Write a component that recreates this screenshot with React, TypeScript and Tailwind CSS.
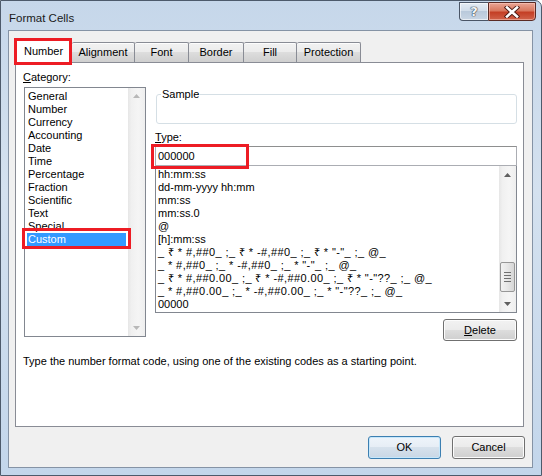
import React from "react";

const categories = [
  "General",
  "Number",
  "Currency",
  "Accounting",
  "Date",
  "Time",
  "Percentage",
  "Fraction",
  "Scientific",
  "Text",
  "Special",
  "Custom",
];

const formats = [
  "hh:mm:ss",
  "dd-mm-yyyy hh:mm",
  "mm:ss",
  "mm:ss.0",
  "@",
  "[h]:mm:ss",
  '_ ₹ * #,##0_ ;_ ₹ * -#,##0_ ;_ ₹ * "-"_ ;_ @_',
  '_ * #,##0_ ;_ * -#,##0_ ;_ * "-"_ ;_ @_',
  '_ ₹ * #,##0.00_ ;_ ₹ * -#,##0.00_ ;_ ₹ * "-"??_ ;_ @_',
  '_ * #,##0.00_ ;_ * -#,##0.00_ ;_ * "-"??_ ;_ @_',
  "00000",
];

const tabs = [
  { label: "Number", w: "w-[57px]" },
  { label: "Alignment", w: "w-[63px]" },
  { label: "Font", w: "w-[54px]" },
  { label: "Border", w: "w-[55px]" },
  { label: "Fill", w: "w-[53px]" },
  { label: "Protection", w: "w-[64px]" },
];

function Arrow({ dir, disabled }: { dir: "up" | "down"; disabled?: boolean }) {
  const c = disabled ? "#b8b8b8" : "#606060";
  return (
    <svg width="7" height="4" viewBox="0 0 7 4">
      {dir === "up" ? (
        <path d="M0 4 L3.5 0 L7 4 Z" fill={c} />
      ) : (
        <path d="M0 0 L3.5 4 L7 0 Z" fill={c} />
      )}
    </svg>
  );
}

const track =
  "bg-[linear-gradient(90deg,#e6e6e6_0%,#f0f0f0_20%,#f5f5f5_60%,#eeeeee_100%)]";

const btn =
  "flex items-center justify-center rounded-[3px] border border-[#707070] bg-[linear-gradient(#f2f2f2_0%,#ebebeb_50%,#dddddd_50%,#cfcfcf_100%)] shadow-[inset_0_0_0_1px_#fcfcfc] text-[11px]";

export default function App() {
  return (
    <div className="w-[542px] h-[476px] overflow-hidden flex flex-col rounded-tr-[7px] border border-[#4d5a6b] bg-[linear-gradient(180deg,#c6d7ea_0%,#d4e1ef_40%,#c3d6eb_100%)] font-['Liberation_Sans',Arial,sans-serif] text-[11px] text-black">
      {/* Title bar */}
      <div className="h-[29px] flex items-start justify-between shrink-0">
        <div className="pl-[8px] pt-[10px] text-[11.5px] leading-[14px] text-[#1a1a1a]">
          Format Cells
        </div>
        <div className="flex mr-[5px] mt-[1px]">
          <div className="w-[29px] h-[19px] flex items-center justify-center border border-[#4a5566] border-r-0 rounded-bl-[4px] bg-[linear-gradient(#e4ecf4_0%,#cfdbe8_50%,#b9c9db_50%,#c9d6e4_100%)] shadow-[inset_0_0_0_1px_rgba(255,255,255,0.6)]">
            <span className="font-['DejaVu_Sans',sans-serif] font-bold text-[13px] leading-[13px] text-[#f4f6f8] [text-shadow:0_0_1px_#2e3a48,0_0_1px_#2e3a48,0_0_1px_#2e3a48]">
              ?
            </span>
          </div>
          <div className="w-[48px] h-[19px] flex items-center justify-center border border-[#5a2a24] rounded-br-[4px] bg-[linear-gradient(#eaa595_0%,#d9785f_45%,#c43f25_55%,#d0624a_100%)] shadow-[inset_0_0_0_1px_rgba(255,210,200,0.5)]">
            <svg width="16" height="12" viewBox="0 0 16 12">
              <path d="M3 1.5 L13 10.5 M13 1.5 L3 10.5" stroke="#4a1a14" strokeWidth="4.4" strokeLinecap="square" />
              <path d="M3 1.5 L13 10.5 M13 1.5 L3 10.5" stroke="#ffffff" strokeWidth="2.6" strokeLinecap="square" />
            </svg>
          </div>
        </div>
      </div>

      {/* Client area */}
      <div className="flex-1 ml-[7px] mr-[8px] mb-[7px] border border-[#8593a5] bg-[#f0f0f0] flex flex-col">
        {/* Tabs */}
        <div className="mt-[8px] ml-[6px] h-[23px] flex items-end relative z-10">
          {tabs.map((t, i) =>
            i === 0 ? (
              <div
                key={t.label}
                className={`${t.w} h-[23px] -mb-px relative flex items-center justify-center bg-white border border-b-0 border-[#898c95] rounded-t-[2px] pb-[1px]`}
              >
                {t.label}
                <div className="absolute left-[-2px] top-[-3px] w-[58px] h-[27px] border-[3px] border-[#ed1c24]" />
              </div>
            ) : (
              <div
                key={t.label}
                className={`${t.w} h-[20px] flex items-center justify-center border border-b-0 border-l-0 border-[#898c95] rounded-t-[2px] bg-[linear-gradient(#f2f2f2_0%,#ebebeb_50%,#dddddd_50%,#cfcfcf_100%)] shadow-[inset_0_1px_0_#fdfdfd]`}
              >
                {t.label}
              </div>
            )
          )}
        </div>

        {/* Panel */}
        <div className="ml-[6px] w-[509px] h-[365px] bg-white border border-[#898c95] flex flex-col">
          <div className="flex items-start pt-[8px] pl-[7px]">
            {/* Category column */}
            <div className="flex flex-col">
              <div className="leading-[13px] h-[13px]">
                <span className="underline">C</span>ategory:
              </div>
              <div className="mt-[3px] ml-px w-[122px] h-[250px] border border-[#828790] flex">
                <div className="flex-1 pt-[2px] pl-[2px]">
                  {categories.map((c) =>
                    c === "Custom" ? (
                      <div key={c} className="relative h-[13px] leading-[13px]">
                        <div className="h-[13px] w-[99px] bg-[#3399ff] text-white pl-px leading-[13px]">
                          {c}
                        </div>
                        <div className="absolute left-[-5px] top-[-5px] w-[109px] h-[21px] border-[3px] border-[#ed1c24]" />
                      </div>
                    ) : (
                      <div key={c} className="h-[13px] leading-[13px] pl-px">
                        {c}
                      </div>
                    )
                  )}
                </div>
                <div className={`w-[17px] h-full flex flex-col justify-between items-center py-[6px] ${track}`}>
                  <Arrow dir="up" disabled />
                  <Arrow dir="down" disabled />
                </div>
              </div>
            </div>

            {/* Right column */}
            <div className="ml-[9px] w-[362px] flex flex-col">
              <fieldset className="mt-[17px] ml-px w-[361px] h-[36px] border border-[#d5dfe5] rounded-[3px] px-[4px]">
                <legend className="px-px leading-[13px] text-[11px]">Sample</legend>
              </fieldset>
              <div className="mt-[7px] leading-[13px] h-[13px]">
                <span className="underline">T</span>ype:
              </div>
              <div className="mt-[2px] relative h-[20px] border border-[#abadb3] border-t-[#8e8f8f] flex items-center pl-[2px] bg-white">
                000000
                <div className="absolute left-[-5px] top-[-3px] w-[98px] h-[25px] border-[3px] border-[#ed1c24]" />
              </div>
              <div className="h-[147px] border border-[#828790] border-t-0 flex">
                <div className="flex-1 pt-[2px] pl-[2px] whitespace-pre overflow-hidden">
                  {formats.map((f, i) => (
                    <div
                      key={i}
                      className={
                        i >= 6 && i <= 9
                          ? "h-[13px] leading-[13px] tracking-[0.4px]"
                          : "h-[13px] leading-[13px]"
                      }
                    >
                      {f}
                    </div>
                  ))}
                </div>
                <div className={`w-[17px] h-full flex flex-col ${track}`}>
                  <div className="h-[17px] flex items-center justify-center">
                    <Arrow dir="up" />
                  </div>
                  <div className="flex-1" />
                  <div className="h-[30px] mx-px rounded-[2px] border border-[#979797] bg-[linear-gradient(90deg,#f2f2f2_0%,#e6e6e6_50%,#d6d6d6_100%)] flex flex-col items-center justify-center gap-[2px]">
                    <div className="w-[7px] h-px bg-[#6f6f6f]" />
                    <div className="w-[7px] h-px bg-[#6f6f6f]" />
                    <div className="w-[7px] h-px bg-[#6f6f6f]" />
                    <div className="w-[7px] h-px bg-[#6f6f6f]" />
                  </div>
                  <div className="h-[3px]" />
                  <div className="h-[17px] flex items-center justify-center">
                    <Arrow dir="down" />
                  </div>
                </div>
              </div>
              <div className="mt-[6px] self-end w-[74px] h-[22px]">
                <div className={`${btn} w-full h-full`}>
                  <span>
                    <span className="underline">D</span>elete
                  </span>
                </div>
              </div>
            </div>
          </div>
          <div className="mt-[14px] pl-[7px] leading-[13px]">
            Type the number format code, using one of the existing codes as a starting point.
          </div>
        </div>

        {/* Bottom buttons */}
        <div className="mt-[9px] flex justify-end gap-[11px] pr-[7px]">
          <div className="w-[73px] h-[23px] flex items-center justify-center rounded-[3px] border border-[#3c7fb1] bg-[linear-gradient(#eef4fa_0%,#e6edf5_50%,#d6e1ec_50%,#c9d7e5_100%)] shadow-[inset_0_0_0_1px_#c6e7fb]">
            OK
          </div>
          <div className={`${btn} w-[73px] h-[23px]`}>Cancel</div>
        </div>
      </div>
    </div>
  );
}
